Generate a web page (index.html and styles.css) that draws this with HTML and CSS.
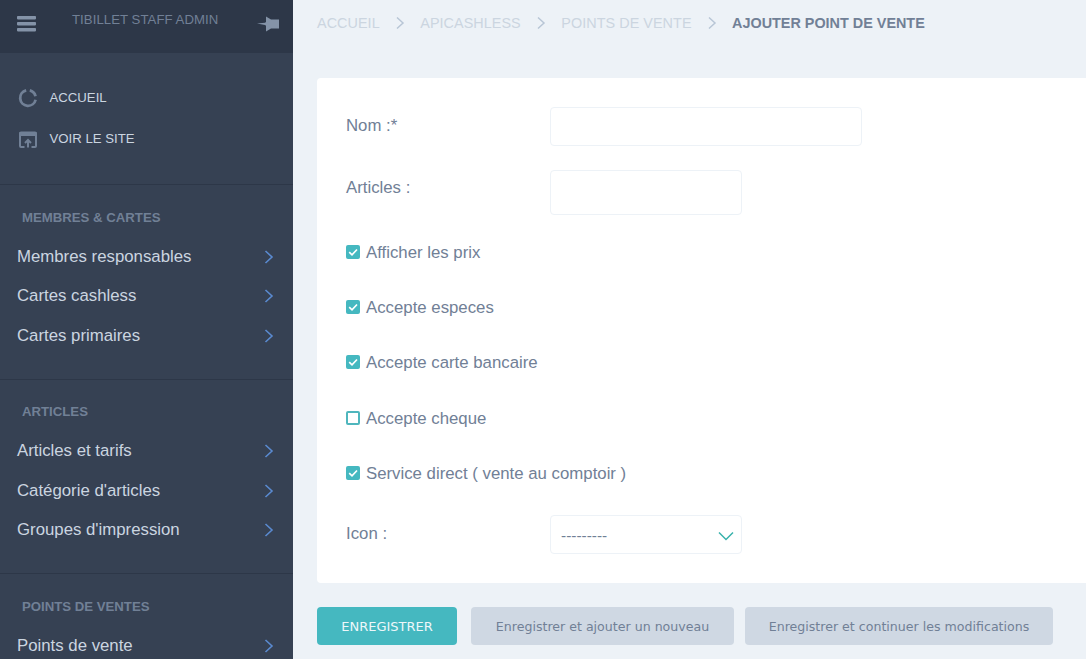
FILE: index.html
```html
<!DOCTYPE html>
<html lang="fr">
<head>
<meta charset="utf-8">
<title>Ajouter point de vente</title>
<link rel="stylesheet" href="styles.css">
</head>
<body>
<div class="app">
  <aside class="sidebar">
    <header class="brand">
      <svg class="burger" viewBox="0 0 19 16" width="19" height="16"><rect width="19" height="3.400" y="0" rx=".8"/><rect width="19" height="3.400" y="6" rx=".8"/><rect width="19" height="3.400" y="12" rx=".8"/></svg>
      <span class="brand-title">TIBILLET STAFF ADMIN</span>
      <svg class="pin" viewBox="0 0 22 16" width="22" height="16"><path d="M0 7.500 L8 6.800 L9 6 L9 .5 L14 3.500 L22 3.500 L22 12.500 L14 12.500 L9 15.500 L9 9.800 L8 9Z"/></svg>
    </header>
    <nav class="quick">
      <a class="quick-link"><svg viewBox="0 0 20 20" width="20" height="20" class="quick-icon"><path d="M11.800 2.400 A7.800 7.800 0 0 1 17.500 8.200" /><path d="M17.600 11.700 A7.800 7.800 0 1 1 8.200 2.400"/></svg>ACCUEIL</a>
      <a class="quick-link"><svg viewBox="0 0 20 20" width="20" height="20" class="quick-icon"><rect class="band" x="1.500" y="3" width="17" height="4"/><path class="thin" d="M6.500 18H3a1 1 0 0 1-1-1V4.500a1 1 0 0 1 1-1h14a1 1 0 0 1 1 1V17a1 1 0 0 1-1 1h-3.500"/><path class="thin" d="M10 18.500v-7M7 14l3-3 3 3"/></svg>VOIR LE SITE</a>
    </nav>
    <section class="group">
      <h2>MEMBRES &amp; CARTES</h2>
      <a class="item">Membres responsables<svg class="chev" viewBox="0 0 10 14" width="10" height="14"><path d="M1.500 1 L8 7 L1.500 13"/></svg></a>
      <a class="item">Cartes cashless<svg class="chev" viewBox="0 0 10 14" width="10" height="14"><path d="M1.500 1 L8 7 L1.500 13"/></svg></a>
      <a class="item">Cartes primaires<svg class="chev" viewBox="0 0 10 14" width="10" height="14"><path d="M1.500 1 L8 7 L1.500 13"/></svg></a>
    </section>
    <section class="group">
      <h2>ARTICLES</h2>
      <a class="item">Articles et tarifs<svg class="chev" viewBox="0 0 10 14" width="10" height="14"><path d="M1.500 1 L8 7 L1.500 13"/></svg></a>
      <a class="item">Catégorie d'articles<svg class="chev" viewBox="0 0 10 14" width="10" height="14"><path d="M1.500 1 L8 7 L1.500 13"/></svg></a>
      <a class="item">Groupes d'impression<svg class="chev" viewBox="0 0 10 14" width="10" height="14"><path d="M1.500 1 L8 7 L1.500 13"/></svg></a>
    </section>
    <section class="group">
      <h2>POINTS DE VENTES</h2>
      <a class="item">Points de vente<svg class="chev" viewBox="0 0 10 14" width="10" height="14"><path d="M1.500 1 L8 7 L1.500 13"/></svg></a>
    </section>
  </aside>
  <main class="main">
    <nav class="crumbs">
      <a>ACCUEIL</a><svg class="sep" viewBox="0 0 10 14" width="10" height="14"><path d="M2 1.500 L8 7 L2 12.500"/></svg>
      <a>APICASHLESS</a><svg class="sep" viewBox="0 0 10 14" width="10" height="14"><path d="M2 1.500 L8 7 L2 12.500"/></svg>
      <a>POINTS DE VENTE</a><svg class="sep" viewBox="0 0 10 14" width="10" height="14"><path d="M2 1.500 L8 7 L2 12.500"/></svg>
      <strong>AJOUTER POINT DE VENTE</strong>
    </nav>
    <form class="card">
      <div class="row row-nom"><label>Nom :*</label><div class="field field-wide"></div></div>
      <div class="row row-articles"><label>Articles :</label><div class="field field-tall"></div></div>
      <div class="check"><span class="box on"><svg viewBox="0 0 14 14" width="14" height="14"><path d="M3.200 7.200 L6 9.800 L11 4.500"/></svg></span>Afficher les prix</div>
      <div class="check"><span class="box on"><svg viewBox="0 0 14 14" width="14" height="14"><path d="M3.200 7.200 L6 9.800 L11 4.500"/></svg></span>Accepte especes</div>
      <div class="check"><span class="box on"><svg viewBox="0 0 14 14" width="14" height="14"><path d="M3.200 7.200 L6 9.800 L11 4.500"/></svg></span>Accepte carte bancaire</div>
      <div class="check"><span class="box"></span>Accepte cheque</div>
      <div class="check"><span class="box on"><svg viewBox="0 0 14 14" width="14" height="14"><path d="M3.200 7.200 L6 9.800 L11 4.500"/></svg></span>Service direct ( vente au comptoir )</div>
      <div class="row row-icon"><label>Icon :</label><div class="field field-select"><span>---------</span><svg viewBox="0 0 16 10" width="16" height="10"><path d="M1 1.500 L8 8.500 L15 1.500"/></svg></div></div>
    </form>
    <div class="actions">
      <button type="button" class="btn primary">ENREGISTRER</button>
      <button type="button" class="btn second">Enregistrer et ajouter un nouveau</button>
      <button type="button" class="btn third">Enregistrer et continuer les modifications</button>
    </div>
  </main>
</div>
</body>
</html>
```
FILE: styles.css
```css
* { box-sizing: border-box; }
html, body { margin: 0; height: 100%; overflow: hidden; }
body { font-family: "Liberation Sans", Arial, sans-serif; color: #718096; background: #edf2f7; }
.app { display: flex; height: 659px; overflow: hidden; }

.sidebar { width: 293px; flex: none; background: #364153; color: #cbd5e0; overflow: hidden; }
.brand { height: 53px; background: #2d3748; display: flex; align-items: flex-start; padding: 15.500px 14px 0 17px; }
.burger { fill: #8493a8; flex: none; }
.brand-title { font-size: 13.200px; letter-spacing: .05px; color: #718096; margin: -3px 0 0 36px; line-height: 14px; }
.pin { fill: #8493a8; margin: .5px 0 0 auto; flex: none; }

.quick { padding: 24px 0 0; height: 132px; border-bottom: 1px solid #2d3748; }
.quick-link { display: flex; align-items: center; height: 41px; padding-left: 18px; font-size: 13.200px; color: #cbd5e0; }
.quick-icon { margin-right: 11.500px; fill: none; stroke: #718096; stroke-width: 2.800; flex: none; }
.quick-icon .thin { stroke-width: 2; }
.quick-icon .band { fill: #718096; stroke: none; }

.group { border-bottom: 1px solid #2d3748; height: 194.500px; padding-top: 25.500px; }
.group h2 { margin: 0 0 12.500px 22px; font-size: 13.200px; line-height: 14px; font-weight: 700; color: #718096; }
.item { display: flex; align-items: center; justify-content: space-between; height: 39.500px; padding: 0 19px 0 17px; font-size: 16.800px; color: #cbd5e0; }
.chev { fill: none; stroke: #5a8ad0; stroke-width: 1.600; flex: none; }

.main { flex: 1; min-width: 0; padding-left: 24px; overflow: hidden; }
.crumbs { height: 78px; padding-top: 15px; display: flex; align-items: flex-start; font-size: 14.400px; letter-spacing: .05px; line-height: 16px; color: #cbd5e0; white-space: nowrap; }
.crumbs strong { color: #718096; letter-spacing: 0; }
.sep { margin: 1px 15.500px 0 15px; fill: none; stroke: #b8c6d6; stroke-width: 1.500; flex: none; }

.card { background: #fff; border-radius: 4px 0 0 4px; height: 505px; padding: 29px 0 0 29px; font-size: 16.800px; color: #718096; }
.row { display: flex; }
.row label { width: 204px; flex: none; padding-top: 9px; line-height: 20px; }
.row-articles label { padding-top: 8px; }
.field { background: #fff; border: 1px solid #edf2f7; border-radius: 4px; }
.field-wide { width: 312px; height: 39px; }
.field-tall { width: 192px; height: 45px; }
.row-articles { margin-top: 24px; }
.row-icon { margin-top: 31.100px; }
.field-select { width: 192px; height: 39px; display: flex; align-items: center; justify-content: space-between; padding: 3px 7px 0 10px; font-size: 15.400px; }
.field-select svg { fill: none; stroke: #38b2ac; stroke-width: 1.500; flex: none; }

.check { display: flex; align-items: center; height: 22px; padding-top: 2px; margin-top: 33.250px; line-height: 20px; }
.row-articles + .check { margin-top: 25.900px; }
.box { width: 14px; height: 14px; margin: -2px 6px 0 0; border: 2px solid #4fb6bd; border-radius: 2px; flex: none; display: block; }
.box.on { background: #45b8c0; border: 0; }
.box svg { fill: none; stroke: #fff; stroke-width: 1.700; display: block; }

.actions { display: flex; margin-top: 24px; }
.btn { height: 38px; border: 0; border-radius: 4px; font-family: "DejaVu Sans", Verdana, sans-serif; font-size: 12.600px; padding: 0; }
.primary { width: 140px; background: #45b8c0; color: #edf7fa; font-size: 13px; }
.second { width: 263px; margin-left: 14px; background: #cfd8e3; color: #718096; }
.third { width: 308px; margin-left: 11px; background: #cfd8e3; color: #718096; }
```
